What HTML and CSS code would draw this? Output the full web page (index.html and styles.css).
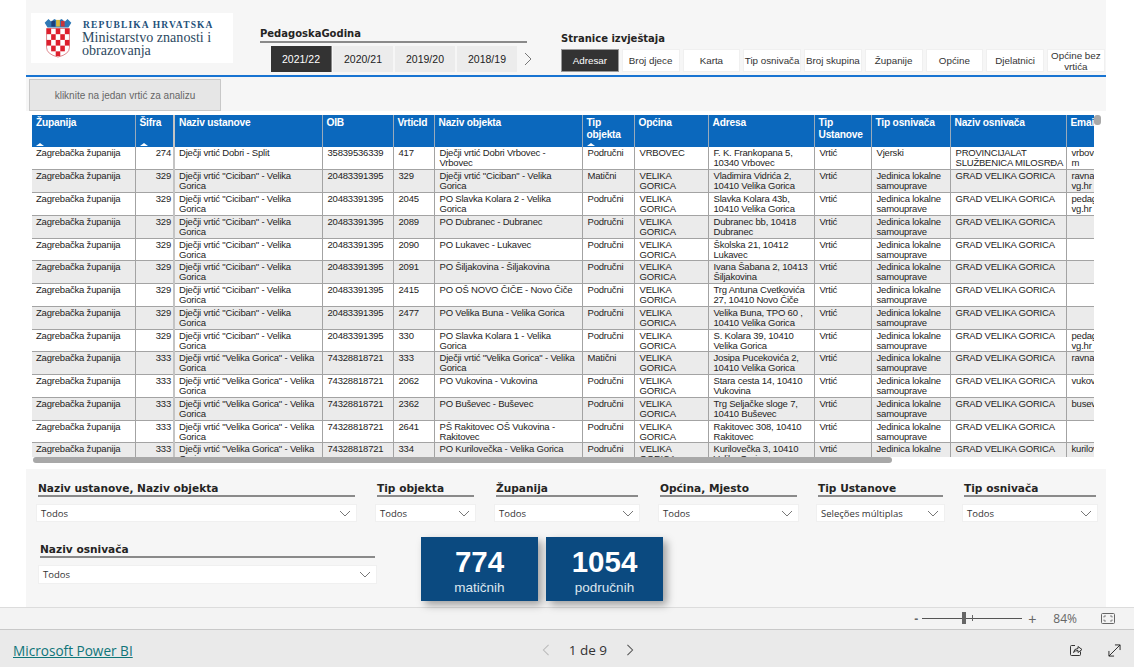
FILE: index.html
```html
<!DOCTYPE html>
<html lang="hr">
<head>
<meta charset="utf-8">
<title>Adresar</title>
<link rel="stylesheet" href="styles.css">
</head>
<body>
<main class="canvas">
  <header class="topbar">
    <div class="logo">
      <svg class="crest" viewBox="0 0 30 42" width="30" height="40">
        <path d="M1 5 L5 1 L8 4 L11 1 L15 3 L19 1 L22 4 L25 1 L29 5 L26 10 L4 10 Z" fill="#2f78b5"/>
        <path d="M8 3 h4 v6 h-4z" fill="#1d3f7a"/><path d="M13 2 h4 v7 h-4z" fill="#d9b93b"/><path d="M18 3 h4 v6 h-4z" fill="#c8353c"/>
        <path d="M3 11 H27 V31 Q27 38 15 41 Q3 38 3 31 Z" fill="#fff" stroke="#c9323b" stroke-width=".6"/>
        <g fill="#dd1f2d">
          <rect x="3" y="11" width="4.8" height="6"/><rect x="12.6" y="11" width="4.8" height="6"/><rect x="22.2" y="11" width="4.8" height="6"/>
          <rect x="7.8" y="17" width="4.8" height="6"/><rect x="17.4" y="17" width="4.8" height="6"/>
          <rect x="3" y="23" width="4.8" height="6"/><rect x="12.6" y="23" width="4.8" height="6"/><rect x="22.2" y="23" width="4.8" height="6"/>
          <rect x="7.8" y="29" width="4.8" height="6"/><rect x="17.4" y="29" width="4.8" height="6"/>
          <rect x="12.6" y="35" width="4.8" height="5"/>
        </g>
      </svg>
      <div class="logo-text">
        <div class="logo-rep">REPUBLIKA HRVATSKA</div>
        <div class="logo-min">Ministarstvo znanosti i obrazovanja</div>
      </div>
    </div>
    <section class="years">
      <h2 class="slicer-title years-title">PedagoskaGodina</h2>
      <div class="tabs">
        <span class="tab active">2021/22</span>
        <span class="tab">2020/21</span>
        <span class="tab wide">2019/20</span>
        <span class="tab">2018/19</span>
        <svg class="tab-next" viewBox="0 0 8 14" width="8" height="14"><path d="M1 1 L7 7 L1 13" fill="none" stroke="#777" stroke-width="1"/></svg>
      </div>
    </section>
    <section class="pages">
      <h2 class="slicer-title pages-title">Stranice izvještaja</h2>
      <div class="page-buttons">
        <span class="pbtn active">Adresar</span>
        <span class="pbtn">Broj djece</span>
        <span class="pbtn">Karta</span>
        <span class="pbtn">Tip osnivača</span>
        <span class="pbtn">Broj skupina</span>
        <span class="pbtn">Županije</span>
        <span class="pbtn">Općine</span>
        <span class="pbtn">Djelatnici</span>
        <span class="pbtn">Općine bez vrtića</span>
      </div>
    </section>
  </header>
  <div class="hintbar"><button class="hint">kliknite na jedan vrtić za analizu</button></div>

  <section class="table-area">
    <div class="table-clip">
      <table class="grid">
        <colgroup>
          <col class="c1"><col class="c2"><col class="c3"><col class="c4"><col class="c5"><col class="c6"><col class="c7"><col class="c8"><col class="c9"><col class="c10"><col class="c11"><col class="c12"><col class="c13">
        </colgroup>
        <thead>
          <tr>
            <th>Županija<i class="sort"></i></th><th>Šifra<i class="sort"></i></th><th class="thick">Naziv ustanove</th><th>OIB</th><th>VrticId</th><th>Naziv objekta</th><th>Tip objekta<i class="sort"></i></th><th>Općina</th><th>Adresa</th><th>Tip Ustanove</th><th>Tip osnivača</th><th>Naziv osnivača</th><th>Email</th>
          </tr>
        </thead>
        <tbody>
          <tr><td>Zagrebačka županija</td><td class="num">274</td><td class="thick">Dječji vrtić Dobri - Split</td><td>35839536339</td><td>417</td><td>Dječji vrtić Dobri Vrbovec - Vrbovec</td><td>Područni</td><td>VRBOVEC</td><td>F. K. Frankopana 5, 10340 Vrbovec</td><td>Vrtić</td><td>Vjerski</td><td>PROVINCIJALAT SLUŽBENICA MILOSRĐA</td><td class="mail">vrbovec<br>m</td></tr>
          <tr><td>Zagrebačka županija</td><td class="num">329</td><td class="thick">Dječji vrtić "Ciciban" - Velika Gorica</td><td>20483391395</td><td>329</td><td>Dječji vrtić "Ciciban" - Velika Gorica</td><td>Matični</td><td>VELIKA GORICA</td><td>Vladimira Vidrića 2, 10410 Velika Gorica</td><td>Vrtić</td><td>Jedinica lokalne samouprave</td><td>GRAD VELIKA GORICA</td><td class="mail">ravnatelj<br>vg.hr</td></tr>
          <tr><td>Zagrebačka županija</td><td class="num">329</td><td class="thick">Dječji vrtić "Ciciban" - Velika Gorica</td><td>20483391395</td><td>2045</td><td>PO Slavka Kolara 2 - Velika Gorica</td><td>Područni</td><td>VELIKA GORICA</td><td>Slavka Kolara 43b, 10410 Velika Gorica</td><td>Vrtić</td><td>Jedinica lokalne samouprave</td><td>GRAD VELIKA GORICA</td><td class="mail">pedagog<br>vg.hr</td></tr>
          <tr><td>Zagrebačka županija</td><td class="num">329</td><td class="thick">Dječji vrtić "Ciciban" - Velika Gorica</td><td>20483391395</td><td>2089</td><td>PO Dubranec - Dubranec</td><td>Područni</td><td>VELIKA GORICA</td><td>Dubranec bb, 10418 Dubranec</td><td>Vrtić</td><td>Jedinica lokalne samouprave</td><td>GRAD VELIKA GORICA</td><td class="mail"></td></tr>
          <tr><td>Zagrebačka županija</td><td class="num">329</td><td class="thick">Dječji vrtić "Ciciban" - Velika Gorica</td><td>20483391395</td><td>2090</td><td>PO Lukavec - Lukavec</td><td>Područni</td><td>VELIKA GORICA</td><td>Školska 21, 10412 Lukavec</td><td>Vrtić</td><td>Jedinica lokalne samouprave</td><td>GRAD VELIKA GORICA</td><td class="mail"></td></tr>
          <tr><td>Zagrebačka županija</td><td class="num">329</td><td class="thick">Dječji vrtić "Ciciban" - Velika Gorica</td><td>20483391395</td><td>2091</td><td>PO Šiljakovina - Šiljakovina</td><td>Područni</td><td>VELIKA GORICA</td><td>Ivana Šabana 2, 10413 Šiljakovina</td><td>Vrtić</td><td>Jedinica lokalne samouprave</td><td>GRAD VELIKA GORICA</td><td class="mail"></td></tr>
          <tr><td>Zagrebačka županija</td><td class="num">329</td><td class="thick">Dječji vrtić "Ciciban" - Velika Gorica</td><td>20483391395</td><td>2415</td><td>PO OŠ NOVO ČIČE - Novo Čiče</td><td>Područni</td><td>VELIKA GORICA</td><td>Trg Antuna Cvetkovića 27, 10410 Novo Čiče</td><td>Vrtić</td><td>Jedinica lokalne samouprave</td><td>GRAD VELIKA GORICA</td><td class="mail"></td></tr>
          <tr><td>Zagrebačka županija</td><td class="num">329</td><td class="thick">Dječji vrtić "Ciciban" - Velika Gorica</td><td>20483391395</td><td>2477</td><td>PO Velika Buna - Velika Gorica</td><td>Područni</td><td>VELIKA GORICA</td><td>Velika Buna, TPO 60 , 10410 Velika Gorica</td><td>Vrtić</td><td>Jedinica lokalne samouprave</td><td>GRAD VELIKA GORICA</td><td class="mail"></td></tr>
          <tr><td>Zagrebačka županija</td><td class="num">329</td><td class="thick">Dječji vrtić "Ciciban" - Velika Gorica</td><td>20483391395</td><td>330</td><td>PO Slavka Kolara 1 - Velika Gorica</td><td>Područni</td><td>VELIKA GORICA</td><td>S. Kolara 39, 10410 Velika Gorica</td><td>Vrtić</td><td>Jedinica lokalne samouprave</td><td>GRAD VELIKA GORICA</td><td class="mail">pedagog<br>vg.hr</td></tr>
          <tr><td>Zagrebačka županija</td><td class="num">333</td><td class="thick">Dječji vrtić "Velika Gorica" - Velika Gorica</td><td>74328818721</td><td>333</td><td>Dječji vrtić "Velika Gorica" - Velika Gorica</td><td>Matični</td><td>VELIKA GORICA</td><td>Josipa Pucekovića 2, 10410 Velika Gorica</td><td>Vrtić</td><td>Jedinica lokalne samouprave</td><td>GRAD VELIKA GORICA</td><td class="mail">ravnatelj</td></tr>
          <tr><td>Zagrebačka županija</td><td class="num">333</td><td class="thick">Dječji vrtić "Velika Gorica" - Velika Gorica</td><td>74328818721</td><td>2062</td><td>PO Vukovina - Vukovina</td><td>Područni</td><td>VELIKA GORICA</td><td>Stara cesta 14, 10410 Vukovina</td><td>Vrtić</td><td>Jedinica lokalne samouprave</td><td>GRAD VELIKA GORICA</td><td class="mail">vukovina</td></tr>
          <tr><td>Zagrebačka županija</td><td class="num">333</td><td class="thick">Dječji vrtić "Velika Gorica" - Velika Gorica</td><td>74328818721</td><td>2362</td><td>PO Buševec - Buševec</td><td>Područni</td><td>VELIKA GORICA</td><td>Trg Seljačke sloge 7, 10410 Buševec</td><td>Vrtić</td><td>Jedinica lokalne samouprave</td><td>GRAD VELIKA GORICA</td><td class="mail">busevec</td></tr>
          <tr><td>Zagrebačka županija</td><td class="num">333</td><td class="thick">Dječji vrtić "Velika Gorica" - Velika Gorica</td><td>74328818721</td><td>2641</td><td>PŠ Rakitovec OŠ Vukovina - Rakitovec</td><td>Područni</td><td>VELIKA GORICA</td><td>Rakitovec 308, 10410 Rakitovec</td><td>Vrtić</td><td>Jedinica lokalne samouprave</td><td>GRAD VELIKA GORICA</td><td class="mail"></td></tr>
          <tr><td>Zagrebačka županija</td><td class="num">333</td><td class="thick">Dječji vrtić "Velika Gorica" - Velika Gorica</td><td>74328818721</td><td>334</td><td>PO Kurilovečka - Velika Gorica</td><td>Područni</td><td>VELIKA GORICA</td><td>Kurilovečka 3, 10410 Velika Gorica</td><td>Vrtić</td><td>Jedinica lokalne samouprave</td><td>GRAD VELIKA GORICA</td><td class="mail">kurilovec</td></tr>
        </tbody>
      </table>
    </div>
    <div class="hscroll"></div>
    <div class="vscroll"></div>
  </section>

  <section class="filters">
    <div class="filter-row">
      <div class="slicer s1"><h3 class="slicer-title">Naziv ustanove, Naziv objekta</h3><div class="drop"><span>Todos</span><svg class="chev" viewBox="0 0 12 7" width="12" height="7"><path d="M1 1 L6 6 L11 1" fill="none" stroke="#777"/></svg></div></div>
      <div class="slicer s2"><h3 class="slicer-title">Tip objekta</h3><div class="drop"><span>Todos</span><svg class="chev" viewBox="0 0 12 7" width="12" height="7"><path d="M1 1 L6 6 L11 1" fill="none" stroke="#777"/></svg></div></div>
      <div class="slicer s3"><h3 class="slicer-title">Županija</h3><div class="drop"><span>Todos</span><svg class="chev" viewBox="0 0 12 7" width="12" height="7"><path d="M1 1 L6 6 L11 1" fill="none" stroke="#777"/></svg></div></div>
      <div class="slicer s4"><h3 class="slicer-title">Općina, Mjesto</h3><div class="drop"><span>Todos</span><svg class="chev" viewBox="0 0 12 7" width="12" height="7"><path d="M1 1 L6 6 L11 1" fill="none" stroke="#777"/></svg></div></div>
      <div class="slicer s5"><h3 class="slicer-title">Tip Ustanove</h3><div class="drop"><span>Seleções múltiplas</span><svg class="chev" viewBox="0 0 12 7" width="12" height="7"><path d="M1 1 L6 6 L11 1" fill="none" stroke="#777"/></svg></div></div>
      <div class="slicer s6"><h3 class="slicer-title">Tip osnivača</h3><div class="drop"><span>Todos</span><svg class="chev" viewBox="0 0 12 7" width="12" height="7"><path d="M1 1 L6 6 L11 1" fill="none" stroke="#777"/></svg></div></div>
    </div>
    <div class="filter-row second">
      <div class="slicer s7"><h3 class="slicer-title">Naziv osnivača</h3><div class="drop"><span>Todos</span><svg class="chev" viewBox="0 0 12 7" width="12" height="7"><path d="M1 1 L6 6 L11 1" fill="none" stroke="#777"/></svg></div></div>
      <div class="tiles">
        <div class="tile"><strong>774</strong><span>matičnih</span></div>
        <div class="tile"><strong>1054</strong><span>područnih</span></div>
      </div>
    </div>
  </section>
</main>

<div class="statusbar">
  <span class="zoom-minus">-</span>
  <div class="zoom-track"><i class="zoom-mid"></i><i class="zoom-thumb"></i></div>
  <span class="zoom-plus">+</span>
  <span class="zoom-pct">84%</span>
  <svg class="fit" viewBox="0 0 14 11" width="14" height="11"><rect x=".5" y=".5" width="13" height="10" rx="1" fill="none" stroke="#666"/><path d="M3 4.5 V3 H5 M9 3 H11 V4.5 M3 6.5 V8 H5 M9 8 H11 V6.5" fill="none" stroke="#666" stroke-width=".8"/></svg>
</div>
<footer class="footer">
  <a class="brand" href="#">Microsoft Power BI</a>
  <nav class="pager">
    <svg viewBox="0 0 8 14" width="8" height="12"><path d="M7 1 L1 7 L7 13" fill="none" stroke="#bbb" stroke-width="1.2"/></svg>
    <span class="pager-text">1 de 9</span>
    <svg viewBox="0 0 8 14" width="8" height="12"><path d="M1 1 L7 7 L1 13" fill="none" stroke="#555" stroke-width="1.2"/></svg>
  </nav>
  <div class="foot-icons">
    <svg viewBox="0 0 14 14" width="14" height="14"><path d="M6 2.5 H2.5 Q1.5 2.5 1.5 3.5 V11.5 Q1.5 12.5 2.5 12.5 H10.5 Q11.5 12.5 11.5 11.5 V8.5" fill="none" stroke="#333" stroke-width="1"/><path d="M4.5 9.5 Q5 5.5 9 5.5 V3.5 L13 6.5 L9 9.5 V7.5 Q6 7.5 4.5 9.5 Z" fill="none" stroke="#333" stroke-width="1"/></svg>
    <svg viewBox="0 0 14 14" width="13" height="13"><path d="M1 13 L13 1 M7.5 1 H13 V6.5 M1 7.5 V13 H6.5" fill="none" stroke="#222" stroke-width="1"/></svg>
  </div>
</footer>
</body>
</html>
```
FILE: styles.css
```css
* { box-sizing: border-box; }
html, body { margin: 0; padding: 0; }
body { width: 1134px; height: 667px; overflow: hidden; background: #fff; font-family: "Liberation Sans", Arial, sans-serif; color: #252423; }

.canvas { width: 1080px; height: 607px; margin-left: 26px; background: #f6f6f6; display: flex; flex-direction: column; }

.topbar { height: 77px; flex: none; display: flex; border-bottom: 2px solid #1874d2; padding-left: 5px; }
.logo { width: 202px; height: 50px; margin-top: 13px; background: #fff; display: flex; padding: 4px 0 0 12px; gap: 9px; }
.crest { flex: none; margin-top: 1px; }
.logo-text { font-family: "Liberation Serif", serif; color: #2e4a62; padding-top: 3px; }
.logo-rep { font-size: 9.5px; font-weight: bold; letter-spacing: 1.15px; line-height: 11px; color: #23507a; white-space: nowrap; margin-left: 1px; }
.logo-min { font-size: 14.1px; line-height: 13px; width: 140px; }

.slicer-title { margin: 0; font-family: "DejaVu Sans", sans-serif; font-weight: bold; font-size: 10.5px; line-height: 12px; color: #252423; border-bottom: 2px solid #8a8a8a; }

.years { width: 267px; flex: none; margin-left: 27px; padding-top: 28px; }
.years-title { font-size: 10px; padding-bottom: 1px; }
.tabs { display: flex; align-items: center; margin: 3px 0 0 11px; }
.tab { flex: none; width: 60px; height: 26px; margin-right: 2px; background: #ececec; font-size: 10.5px; display: flex; align-items: center; justify-content: center; color: #222; }
.tab.wide { width: 60px; }
.tab.active { background: #333; color: #fff; width: 61px; margin-right: 1px; border-right: 1px solid #888; }
.tab-next { flex: none; margin-left: 5px; }

.pages { margin-left: 34px; padding-top: 33px; }
.pages-title { border: 0; font-size: 10px; }
.page-buttons { display: flex; gap: 3px; margin-top: 4px; }
.pbtn { width: 57.75px; height: 23px; padding: 0; background: #fff; border: 1px solid #f0f0f0; font-size: 9.8px; line-height: 11px; text-align: center; display: flex; align-items: center; justify-content: center; color: #333; }
.pbtn.active { background: #333; color: #fff; border: 1px solid #999; }

.hintbar { height: 34px; flex: none; padding: 2px 0 0 3px; }
.hint { display: block; width: 192px; height: 32px; margin: 0; padding: 0; background: #e6e6e6; border: 1px solid #c8c8c8; font: 10px "Liberation Sans", sans-serif; color: #666; }

.table-area { height: 358px; flex: none; background: #fff; padding: 4px 0 0 6px; position: relative; }
.table-clip { width: 1062px; height: 342px; overflow: hidden; }
.grid { border-collapse: collapse; table-layout: fixed; width: 1062px; font-size: 9.5px; letter-spacing: -.2px; line-height: 10px; color: #252423; }
.c1 { width: 103px; } .c2 { width: 39px; } .c3 { width: 148px; } .c4 { width: 71px; } .c5 { width: 41px; } .c6 { width: 148px; } .c7 { width: 52px; } .c8 { width: 74px; } .c9 { width: 106px; } .c10 { width: 57px; } .c11 { width: 79px; } .c12 { width: 116px; } .c13 { width: 28px; }
.grid th { height: 32px; background: #0b68bd; color: #fff; font-size: 10.2px; line-height: 12px; text-align: left; vertical-align: top; padding: 2px 3px 0 4px; border-left: 1px solid #9ab; position: relative; }
.grid th:first-child { border-left: 0; }
.sort { position: absolute; left: 4px; bottom: 1px; width: 0; height: 0; border: 4px solid transparent; border-top: 0; border-bottom: 3px solid #fff; }
.grid td { height: 22.77px; vertical-align: top; padding: 1px 5px 0 5px; border: 1px solid #a3a3a3; border-width: 1px 0 0 1px; overflow: hidden; }
.grid td:first-child { border-left: 0; padding-left: 4px; padding-right: 0; }
.grid td:nth-child(12) { padding-right: 0; }
.grid tbody tr:first-child td { border-top: 0; }
.grid tbody tr:nth-child(even) td { background: #ebebeb; }
.grid .thick { border-left: 2px solid #c4c4c4; padding-left: 4px; }
.grid .num { text-align: right; padding-right: 2px; }
.grid .mail { white-space: nowrap; padding-right: 0; }

.hscroll { position: absolute; left: 7px; top: 346px; width: 859px; height: 6px; border-radius: 3px; background: #a8a8a8; }
.vscroll { position: absolute; left: 1068px; top: 4px; width: 7px; height: 10px; border-radius: 3px; background: #a8a8a8; }

.filters { flex: 1; display: flex; flex-direction: column; padding: 13px 0 0 12px; }
.filter-row { display: flex; }
.slicer .slicer-title { padding-bottom: 1px; font-size: 10.6px; }
.drop { height: 18px; background: #fff; border: 1px solid #f0f0f0; margin: 7px -2px 0; padding: 0 5px 0 4px; display: flex; align-items: center; justify-content: space-between; font-size: 9.5px; color: #333; font-family: "Open Sans", sans-serif; }
.s1 { width: 317px; } .s2 { width: 97px; margin-left: 22px; } .s3 { width: 142px; margin-left: 22px; }
.s4 { width: 137px; margin-left: 22px; } .s5 { width: 125px; margin-left: 21px; } .s6 { width: 132px; margin-left: 21px; }
.second { margin-top: 21px; }
.s7 { width: 335px; margin-left: 2px; }
.s7 .drop { height: 19px; }
.tiles { display: flex; gap: 8px; margin: -6px 0 0 46px; }
.tile { width: 117px; height: 64px; background: #0b4a80; box-shadow: 4px 4px 8px rgba(0,0,0,.35); color: #fff; display: flex; flex-direction: column; align-items: center; padding-top: 9px; }
.tile strong { font-size: 29.5px; line-height: 32px; }
.tile span { font-size: 13.5px; line-height: 17px; color: #dde6ee; margin-top: 1px; }

.statusbar { height: 23px; background: #f3f3f3; border-top: 1px solid #dcdcdc; border-bottom: 1px solid #c8c8c8; display: flex; align-items: center; justify-content: flex-end; padding-right: 19px; font-size: 12px; color: #666; }
.zoom-minus { font-weight: bold; margin-right: 4px; }
.zoom-track { width: 100px; height: 1px; background: #555; margin-right: 6px; position: relative; }
.zoom-thumb { position: absolute; left: 40px; top: -6px; width: 4px; height: 12px; background: #666; }
.zoom-mid { position: absolute; left: 50px; top: -3px; width: 1px; height: 6px; background: #666; }
.zoom-plus { margin-right: 17px; font-size: 14px; }
.zoom-pct { margin-right: 24px; font-family: "Open Sans", sans-serif; }

.footer { height: 37px; background: #eaeaea; display: flex; align-items: center; padding: 3px 13px 0; }
.brand { font-family: "Open Sans", sans-serif; font-size: 13.6px; color: #0f7579; text-decoration: underline; }
.pager { display: flex; align-items: center; gap: 19px; margin-left: 409px; font-family: "Open Sans", sans-serif; font-size: 13.5px; color: #333; }
.foot-icons { margin-left: auto; display: flex; align-items: center; gap: 25px; }
```
